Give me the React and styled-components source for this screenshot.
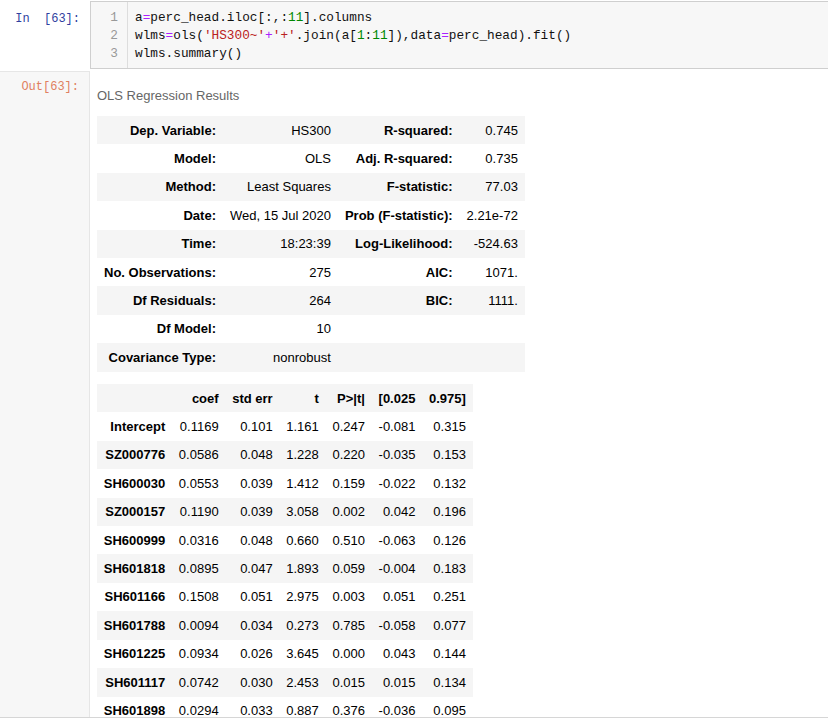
import React from "react";
import styled, { createGlobalStyle } from "styled-components";

const GlobalStyle = createGlobalStyle`
  html, body {
    margin: 0;
    padding: 0;
    background: #fff;
    overflow: hidden;
  }
`;

const codeLines = [
  [
    ["a", ""],
    ["=", "op"],
    ["perc_head.iloc[:,:", ""],
    ["11", "num"],
    ["].columns", ""],
  ],
  [
    ["wlms", ""],
    ["=", "op"],
    ["ols(", ""],
    ["'HS300~'", "str"],
    ["+", "op"],
    ["'+'", "str"],
    [".join(a[", ""],
    ["1", "num"],
    [":", ""],
    ["11", "num"],
    ["]),data", ""],
    ["=", "op"],
    ["perc_head).fit()", ""],
  ],
  [["wlms.summary()", ""]],
];

const infoRows = [
  ["Dep. Variable:", "HS300", "R-squared:", "0.745"],
  ["Model:", "OLS", "Adj. R-squared:", "0.735"],
  ["Method:", "Least Squares", "F-statistic:", "77.03"],
  ["Date:", "Wed, 15 Jul 2020", "Prob (F-statistic):", "2.21e-72"],
  ["Time:", "18:23:39", "Log-Likelihood:", "-524.63"],
  ["No. Observations:", "275", "AIC:", "1071."],
  ["Df Residuals:", "264", "BIC:", "1111."],
  ["Df Model:", "10", "", ""],
  ["Covariance Type:", "nonrobust", "", ""],
];

const coefHead = ["", "coef", "std err", "t", "P>|t|", "[0.025", "0.975]"];

const coefRows = [
  ["Intercept", "0.1169", "0.101", "1.161", "0.247", "-0.081", "0.315"],
  ["SZ000776", "0.0586", "0.048", "1.228", "0.220", "-0.035", "0.153"],
  ["SH600030", "0.0553", "0.039", "1.412", "0.159", "-0.022", "0.132"],
  ["SZ000157", "0.1190", "0.039", "3.058", "0.002", "0.042", "0.196"],
  ["SH600999", "0.0316", "0.048", "0.660", "0.510", "-0.063", "0.126"],
  ["SH601818", "0.0895", "0.047", "1.893", "0.059", "-0.004", "0.183"],
  ["SH601166", "0.1508", "0.051", "2.975", "0.003", "0.051", "0.251"],
  ["SH601788", "0.0094", "0.034", "0.273", "0.785", "-0.058", "0.077"],
  ["SH601225", "0.0934", "0.026", "3.645", "0.000", "0.043", "0.144"],
  ["SH601117", "0.0742", "0.030", "2.453", "0.015", "0.015", "0.134"],
  ["SH601898", "0.0294", "0.033", "0.887", "0.376", "-0.036", "0.095"],
];

const App = () => {
  return (
    <>
      <GlobalStyle />
      <Notebook>
        <InputRow>
          <InPrompt>In&nbsp;&nbsp;[63]:</InPrompt>
          <Editor>
            <Gutter>
              {codeLines.map((_, i) => (
                <LineNo key={i}>{i + 1}</LineNo>
              ))}
            </Gutter>
            <Code>
              {codeLines.map((line, i) => (
                <CodeLine key={i}>
                  {line.map(([text, kind], j) => (
                    <Token key={j} $kind={kind}>
                      {text}
                    </Token>
                  ))}
                </CodeLine>
              ))}
            </Code>
          </Editor>
        </InputRow>

        <OutputRow>
          <OutPrompt>Out[63]:</OutPrompt>
          <OutputArea>
            <Caption>OLS Regression Results</Caption>
            <SummaryTable $pad={7}>
              <tbody>
                {infoRows.map((row, i) => (
                  <tr key={i}>
                    <th>{row[0]}</th>
                    <td>{row[1]}</td>
                    <th>{row[2]}</th>
                    <td>{row[3]}</td>
                  </tr>
                ))}
              </tbody>
            </SummaryTable>
            <SummaryTable $pad={6.8} $gap>
              <tbody>
                <tr>
                  {coefHead.map((h, i) => (
                    <th key={i}>{h}</th>
                  ))}
                </tr>
                {coefRows.map((row, i) => (
                  <tr key={i}>
                    <th>{row[0]}</th>
                    {row.slice(1).map((v, j) => (
                      <td key={j}>{v}</td>
                    ))}
                  </tr>
                ))}
              </tbody>
            </SummaryTable>
          </OutputArea>
        </OutputRow>
      </Notebook>
    </>
  );
};

const Notebook = styled.div`
  width: 828px;
  height: 718px;
  overflow: hidden;
  padding-top: 1px;
  box-sizing: border-box;
`;

const InputRow = styled.div`
  display: flex;
  align-items: flex-start;
`;

const InPrompt = styled.div`
  width: 90px;
  flex: none;
  box-sizing: border-box;
  padding: 10px 10px 0 0;
  text-align: right;
  font-family: "Liberation Mono", monospace;
  font-size: 12px;
  line-height: 16px;
  color: #303f9f;
`;

const Editor = styled.div`
  flex: 1;
  display: flex;
  border: 1px solid #cfcfcf;
  border-right: none;
  background: #f7f7f7;
  height: 68px;
  box-sizing: border-box;
`;

const Gutter = styled.div`
  width: 36px;
  flex: none;
  border-right: 1px solid #dddddd;
  padding-top: 7px;
  box-sizing: content-box;
`;

const LineNo = styled.div`
  text-align: right;
  padding-right: 9px;
  font-family: "Liberation Mono", monospace;
  font-size: 12.75px;
  line-height: 18px;
  color: #999;
`;

const Code = styled.div`
  padding: 7px 0 0 7px;
`;

const CodeLine = styled.div`
  font-family: "Liberation Mono", monospace;
  font-size: 12.75px;
  line-height: 18px;
  color: #111;
  white-space: pre;
`;

const tokenColors = {
  op: "#aa22ff",
  num: "#008800",
  str: "#ba2121",
};

const Token = styled.span`
  color: ${(p) => tokenColors[p.$kind] || "inherit"};
`;

const OutputRow = styled.div`
  display: flex;
  margin-top: 2px;
  height: 647px;
  box-sizing: border-box;
  border-bottom: 1px solid #d6d6d6;
  overflow: hidden;
`;

const OutPrompt = styled.div`
  width: 90px;
  flex: none;
  box-sizing: border-box;
  background: #f7f7f7;
  border-top: 1px solid #e6e6e6;
  border-right: 1px solid #e6e6e6;
  padding: 7px 10px 0 0;
  text-align: right;
  font-family: "Liberation Mono", monospace;
  font-size: 12px;
  line-height: 16px;
  color: #e0805f;
`;

const OutputArea = styled.div`
  flex: 1;
  padding: 17px 0 0 7px;
  font-family: "Liberation Sans", Arial, sans-serif;
`;

const Caption = styled.div`
  font-size: 13px;
  line-height: 15px;
  color: #666;
  margin-bottom: 13px;
`;

const SummaryTable = styled.table`
  border-collapse: collapse;
  border: none;
  font-size: 13px;
  color: #000;
  margin-top: ${(p) => (p.$gap ? "12.4px" : "0")};

  tr:nth-child(odd) {
    background: #f5f5f5;
  }

  th,
  td {
    padding: 6.5px ${(p) => p.$pad}px;
    line-height: 15.4px;
    text-align: right;
    vertical-align: middle;
    white-space: nowrap;
  }

  th {
    font-weight: bold;
  }
`;

export default App;
